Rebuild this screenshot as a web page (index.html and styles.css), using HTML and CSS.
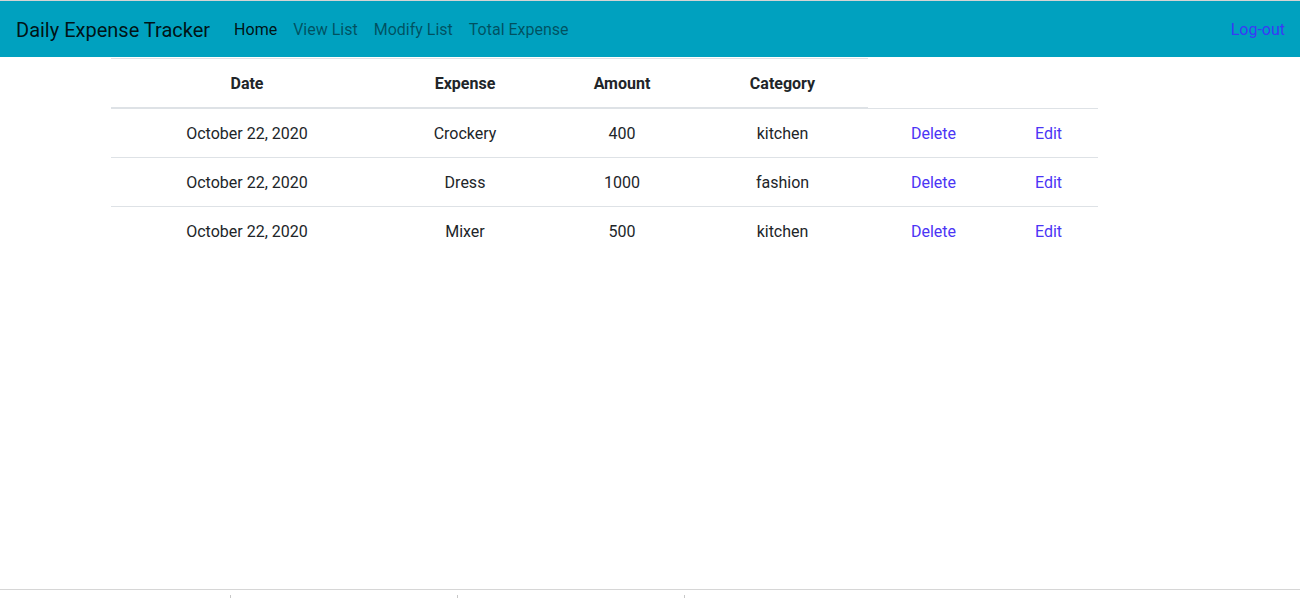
FILE: index.html
```html
<!DOCTYPE html>
<html>
<head>
<meta charset="utf-8">
<title>Daily Expense Tracker</title>
<link rel="stylesheet" href="styles.css">
</head>
<body>
<div class="page">
  <nav class="navbar">
    <a class="brand" href="#">Daily Expense Tracker</a>
    <ul class="nav-links">
      <li><a class="nav-link active" href="#">Home</a></li>
      <li><a class="nav-link" href="#">View List</a></li>
      <li><a class="nav-link" href="#">Modify List</a></li>
      <li><a class="nav-link" href="#">Total Expense</a></li>
    </ul>
    <a class="logout" href="#">Log-out</a>
  </nav>
  <main class="content">
    <table class="expense-table">
      <colgroup>
        <col class="c-date"><col class="c-exp"><col class="c-amt"><col class="c-cat"><col class="c-del"><col class="c-edit">
      </colgroup>
      <thead>
        <tr>
          <th>Date</th>
          <th>Expense</th>
          <th>Amount</th>
          <th>Category</th>
        </tr>
      </thead>
      <tbody>
        <tr>
          <td>October 22, 2020</td>
          <td>Crockery</td>
          <td>400</td>
          <td>kitchen</td>
          <td><a class="action" href="#">Delete</a></td>
          <td><a class="action" href="#">Edit</a></td>
        </tr>
        <tr>
          <td>October 22, 2020</td>
          <td>Dress</td>
          <td>1000</td>
          <td>fashion</td>
          <td><a class="action" href="#">Delete</a></td>
          <td><a class="action" href="#">Edit</a></td>
        </tr>
        <tr>
          <td>October 22, 2020</td>
          <td>Mixer</td>
          <td>500</td>
          <td>kitchen</td>
          <td><a class="action" href="#">Delete</a></td>
          <td><a class="action" href="#">Edit</a></td>
        </tr>
      </tbody>
    </table>
  </main>
  <footer class="footer">
    <span class="tick"></span><span class="tick"></span><span class="tick"></span>
  </footer>
</div>
</body>
</html>
```

FILE: styles.css
```css
* { box-sizing: border-box; }
html, body { margin: 0; padding: 0; }
body {
  font-family: Roboto, "Liberation Sans", sans-serif;
  font-size: 16px;
  line-height: 1.5;
  color: #212529;
  background: #fff;
}
a { text-decoration: none; }
.page {
  height: 100vh;
  display: flex;
  flex-direction: column;
  border-top: 1px solid #d4d4d4;
}
.navbar {
  height: 56px;
  background: #00a1bf;
  display: flex;
  align-items: center;
  padding: 2px 15px 0 16px;
}
.brand {
  font-size: 20px;
  line-height: 30px;
  color: rgba(0,0,0,0.9);
  margin-right: 16px;
}
.nav-links {
  list-style: none;
  margin: 0;
  padding: 0;
  display: flex;
  flex: 1;
}
.nav-link {
  display: block;
  padding: 8px;
  color: rgba(0,0,0,0.5);
}
.nav-link.active { color: rgba(0,0,0,0.9); }
.logout { color: #3a3af5; }
.content {
  flex: 1;
  padding-left: 111px;
  padding-top: 1px;
}
.expense-table {
  border-collapse: collapse;
  width: 987px;
  table-layout: fixed;
}
.c-date { width: 272px; }
.c-exp { width: 164px; }
.c-amt { width: 150px; }
.c-cat { width: 171px; }
.c-del { width: 131px; }
.c-edit { width: 99px; }
.expense-table th,
.expense-table td {
  padding: 13px 0 11px;
  text-align: center;
  line-height: 24px;
}
.expense-table th {
  font-weight: 700;
  border-top: 1px solid #dee2e6;
  border-bottom: 2px solid #dee2e6;
}
.expense-table td { border-top: 1px solid #dee2e6; }
.action { color: #4b35f5; }
.footer {
  height: 9px;
  border-top: 1px solid #d6d6d6;
  display: flex;
  align-items: flex-end;
  padding-left: 4px;
}
.tick {
  width: 227px;
  height: 3px;
  border-right: 1px solid #c8c8c8;
}
```
